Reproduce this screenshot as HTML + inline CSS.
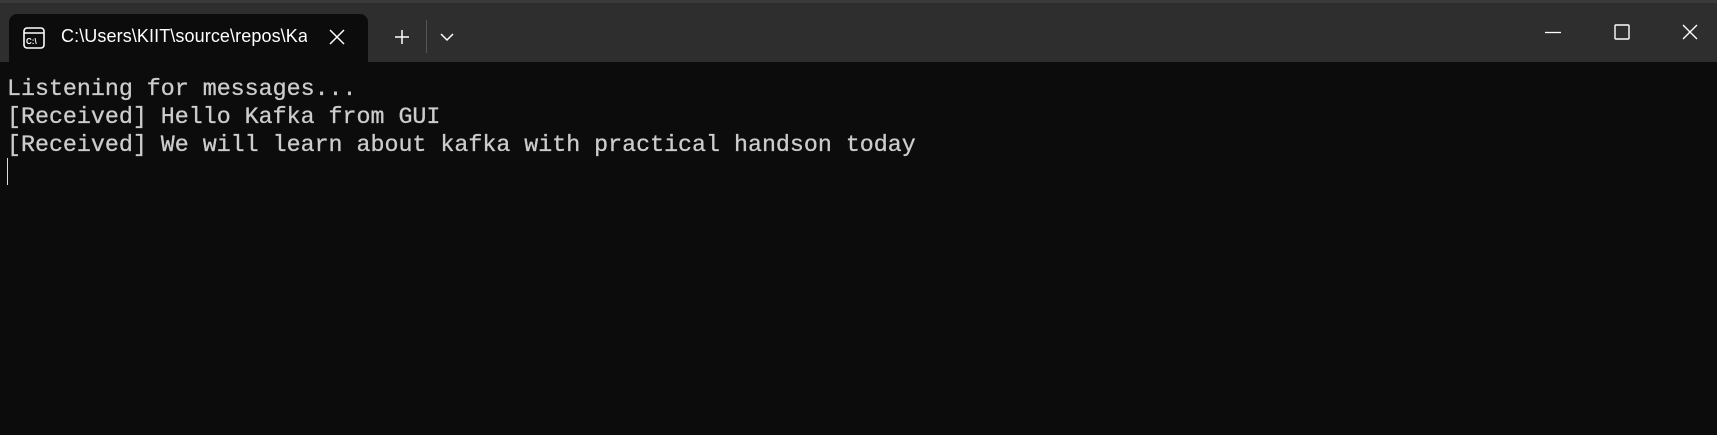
<!DOCTYPE html>
<html><head><meta charset="utf-8"><style>
html,body{margin:0;padding:0;width:1717px;height:435px;overflow:hidden;background:#0c0c0c}
.top{position:absolute;left:0;top:0;width:1717px;height:62px;background:#2e2e2e}
.strip{position:absolute;left:0;top:0;width:1717px;height:3px;background:#3a3a3a}
.tab{position:absolute;left:9px;top:14px;width:359px;height:48px;background:#0c0c0c;border-radius:8px 8px 0 0}
.title{position:absolute;left:61px;top:26px;font:18px "Liberation Sans",sans-serif;color:#fff;width:246px;overflow:hidden;white-space:nowrap;letter-spacing:0.1px}
.term{position:absolute;left:7px;top:75px;font:23.3px/28px "Liberation Mono",monospace;color:#cccccc;white-space:pre;-webkit-text-stroke:0.3px #cccccc}
.cur{position:absolute;left:7px;top:158px;width:1px;height:27px;background:#ddd}
svg{position:absolute}
</style></head><body>
<div class="top"></div><div class="strip"></div>
<div class="tab"></div>
<svg style="left:23px;top:27px" width="22" height="22" viewBox="0 0 22 22"><rect x="1" y="1" width="20" height="20" rx="3" fill="none" stroke="#fff" stroke-width="1.6"/><line x1="1" y1="6" x2="21" y2="6" stroke="#fff" stroke-width="1.4"/><text x="3" y="17" font-family="Liberation Sans" font-size="8" fill="#fff" font-weight="bold">C:\</text></svg>
<div class="title">C:\Users\KIIT\source\repos\Kafka</div>
<svg style="left:329px;top:29px" width="16" height="16"><path d="M1 1L15 15M15 1L1 15" stroke="#fff" stroke-width="1.5"/></svg>
<svg style="left:394px;top:29px" width="16" height="16"><path d="M8 1V15M1 8H15" stroke="#fff" stroke-width="1.5"/></svg>
<div style="position:absolute;left:426px;top:20px;width:1px;height:33px;background:#555"></div>
<svg style="left:440px;top:33px" width="14" height="9"><path d="M1 1L7 7L13 1" stroke="#fff" stroke-width="1.5" fill="none"/></svg>
<svg style="left:1545px;top:31px" width="16" height="3"><line x1="0" y1="1.5" x2="16" y2="1.5" stroke="#fff" stroke-width="1.3"/></svg>
<svg style="left:1614px;top:24px" width="16" height="16"><rect x="1" y="1" width="14" height="14" rx="1" fill="none" stroke="#fff" stroke-width="1.4"/></svg>
<svg style="left:1682px;top:24px" width="16" height="16"><path d="M1 1L15 15M15 1L1 15" stroke="#fff" stroke-width="1.4"/></svg>
<div class="term">Listening for messages...
[Received] Hello Kafka from GUI
[Received] We will learn about kafka with practical handson today</div>
<div class="cur"></div>
</body></html>
